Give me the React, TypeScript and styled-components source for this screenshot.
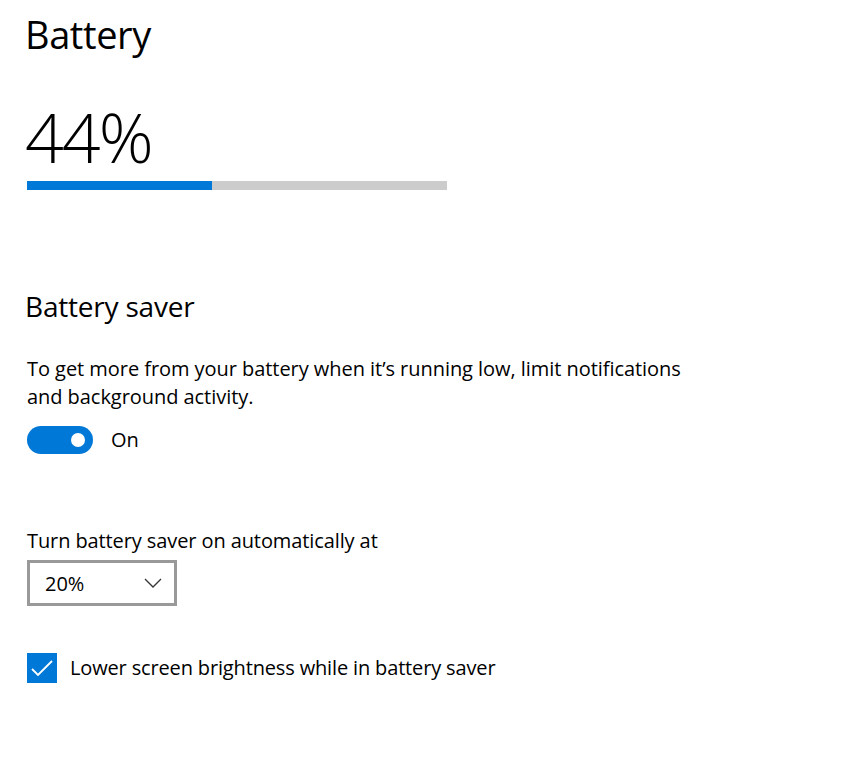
import React from "react";
import styled, { createGlobalStyle } from "styled-components";

const Global = createGlobalStyle`
  html, body { margin: 0; padding: 0; background: #ffffff; }
  body { font-family: "Open Sans", "Noto Sans", sans-serif; color: #000; }
`;

const Page = styled.div`
  width: 859px;
  height: 784px;
  box-sizing: border-box;
  padding: 8px 0 0 27px;
  display: flex;
  flex-direction: column;
`;

const Title = styled.h1`
  margin: 0 0 0 -2px;
  font-weight: 400;
  font-size: 38px;
  line-height: 52px;
  letter-spacing: -0.4px;
`;

const Percent = styled.div`
  margin-top: 41px;
  font-weight: 300;
  font-size: 68px;
  line-height: 72px;
  letter-spacing: -2px;
  margin-left: -2px;
`;

const Track = styled.div`
  margin-top: 8px;
  width: 420px;
  height: 9px;
  background: #cccccc;
  display: flex;
`;

const Fill = styled.div`
  height: 100%;
  background: #0078d7;
`;

const Subtitle = styled.h2`
  margin: 97px 0 0 -2px;
  font-weight: 400;
  font-size: 28px;
  line-height: 38px;
  letter-spacing: -0.2px;
`;

const Text = styled.span`
  font-size: 20px;
  line-height: 28px;
  letter-spacing: -0.15px;
`;

const Body = styled.p`
  margin: 30px 0 0 0;
  width: 670px;
  font-size: 20px;
  line-height: 28px;
  letter-spacing: -0.05px;
`;

const ToggleRow = styled.div`
  margin-top: 15px;
  display: flex;
  align-items: center;
  gap: 18px;
`;

const Switch = styled.div<{ $on: boolean }>`
  width: 66px;
  height: 28px;
  border-radius: 14px;
  background: ${(p) => (p.$on ? "#0078d7" : "#fff")};
  display: flex;
  align-items: center;
  justify-content: ${(p) => (p.$on ? "flex-end" : "flex-start")};
  padding: 0 8px;
  box-sizing: border-box;
`;

const Knob = styled.div`
  width: 14px;
  height: 14px;
  border-radius: 50%;
  background: #fff;
`;

const FieldLabel = styled.div`
  margin-top: 73px;
  font-size: 20px;
  line-height: 28px;
  letter-spacing: -0.1px;
`;

const Select = styled.div`
  margin-top: 5px;
  width: 150px;
  height: 46px;
  box-sizing: border-box;
  border: 3px solid #999999;
  display: flex;
  align-items: center;
  justify-content: space-between;
  padding: 0 12px 0 15px;
  font-size: 20px;
`;

const CheckRow = styled.label`
  margin-top: 47px;
  display: flex;
  align-items: center;
  gap: 13px;
`;

const Box = styled.div`
  width: 30px;
  height: 30px;
  background: #0078d7;
  display: flex;
  align-items: center;
  justify-content: center;
`;

export default function App() {
  const level = 44;
  return (
    <>
      <Global />
      <Page>
        <Title>Battery</Title>
        <Percent>{level}%</Percent>
        <Track>
          <Fill style={{ width: `${level}%` }} />
        </Track>
        <Subtitle>Battery saver</Subtitle>
        <Body>
          To get more from your battery when it’s running low, limit notifications and background activity.
        </Body>
        <ToggleRow>
          <Switch $on>
            <Knob />
          </Switch>
          <Text>On</Text>
        </ToggleRow>
        <FieldLabel>Turn battery saver on automatically at</FieldLabel>
        <Select>
          <span>20%</span>
          <svg width="18" height="10" viewBox="0 0 18 10">
            <path d="M1 1 L9 9 L17 1" fill="none" stroke="#333" strokeWidth="1.3" />
          </svg>
        </Select>
        <CheckRow>
          <Box>
            <svg width="24" height="20" viewBox="0 0 24 20">
              <path d="M2 11 L8 17 L22 3" fill="none" stroke="#fff" strokeWidth="1.8" />
            </svg>
          </Box>
          <Text>Lower screen brightness while in battery saver</Text>
        </CheckRow>
      </Page>
    </>
  );
}
